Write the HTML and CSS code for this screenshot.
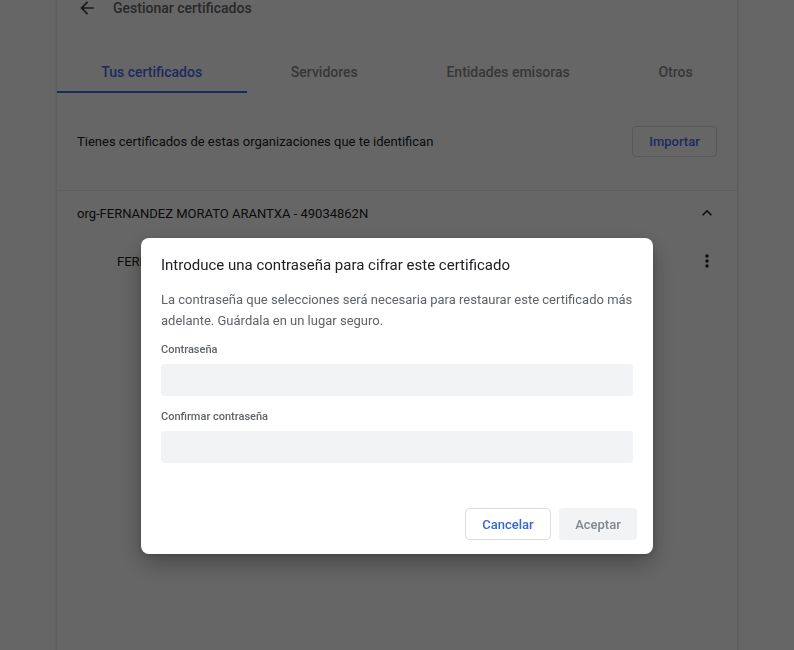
FILE: index.html
```html
<!DOCTYPE html>
<html lang="es">
<head>
<meta charset="utf-8">
<title>Gestionar certificados</title>
<link rel="stylesheet" href="styles.css">
</head>
<body>
<main class="card">
  <div class="header">
    <svg class="icon back" viewBox="0 0 24 24"><path d="M20 11H7.83l5.59-5.59L12 4l-8 8 8 8 1.41-1.41L7.83 13H20v-2z"/></svg>
    <h1 class="title">Gestionar certificados</h1>
  </div>
  <nav class="tabs">
    <div class="tab active">Tus certificados</div>
    <div class="tab">Servidores</div>
    <div class="tab">Entidades emisoras</div>
    <div class="tab">Otros</div>
  </nav>
  <section class="intro">
    <p class="intro-text">Tienes certificados de estas organizaciones que te identifican</p>
    <button class="btn-import">Importar</button>
  </section>
  <section class="org">
    <div class="org-row">
      <span class="org-name">org-FERNANDEZ MORATO ARANTXA - 49034862N</span>
      <svg class="icon" viewBox="0 0 24 24"><path d="M12 8l-6 6 1.41 1.41L12 10.83l4.59 4.58L18 14z"/></svg>
    </div>
    <div class="cert-row">
      <span class="cert-name">FERNANDEZ MORATO ARANTXA - 49034862N</span>
      <svg class="icon" viewBox="0 0 24 24"><path d="M12 8c1.1 0 2-.9 2-2s-.9-2-2-2-2 .9-2 2 .9 2 2 2zm0 2c-1.1 0-2 .9-2 2s.9 2 2 2 2-.9 2-2-.9-2-2-2zm0 6c-1.1 0-2 .9-2 2s.9 2 2 2 2-.9 2-2-.9-2-2-2z"/></svg>
    </div>
  </section>
</main>
<div class="scrim"></div>
<div class="dialog" role="dialog">
  <h2 class="dialog-title">Introduce una contraseña para cifrar este certificado</h2>
  <p class="dialog-body">La contraseña que selecciones será necesaria para restaurar este certificado más adelante. Guárdala en un lugar seguro.</p>
  <label class="field-label">Contraseña</label>
  <div class="field"></div>
  <label class="field-label second">Confirmar contraseña</label>
  <div class="field"></div>
  <div class="actions">
    <button class="btn-cancel">Cancelar</button>
    <button class="btn-accept">Aceptar</button>
  </div>
</div>
</body>
</html>
```

FILE: styles.css
```css
* { box-sizing: border-box; }
html, body { margin: 0; padding: 0; }
body {
  font-family: Roboto, "Liberation Sans", sans-serif;
  background: #ffffff;
  height: 650px;
  overflow: hidden;
}
.card {
  width: 680px;
  height: 650px;
  margin: 0 auto;
  background: #fff;
  box-shadow: 0 0 2px 1px rgba(0,0,0,0.12);
}
.icon { width: 20px; height: 20px; fill: #5f6368; flex: none; }
.header {
  display: flex;
  align-items: center;
  height: 16px;
  padding-left: 20px;
}
.header .back { fill: #444; }
.title {
  margin: 0 0 0 16px;
  font-size: 14px;
  font-weight: 500;
  color: #666;
  line-height: 18px;
}
.tabs {
  display: flex;
  margin-top: 37px;
}
.tab {
  flex: 1 1 auto;
  text-align: center;
  height: 40px;
  line-height: 38px;
  font-size: 14px;
  font-weight: 500;
  color: #8a8a8a;
  border-bottom: 2px solid transparent;
}
.tab.active {
  color: #4a6aee;
  border-bottom-color: #4a6aee;
}
.intro {
  display: flex;
  align-items: center;
  justify-content: space-between;
  height: 97px;
  padding: 0 20px;
}
.intro-text {
  margin: 0;
  font-size: 13px;
  color: #202124;
}
.btn-import {
  height: 31px;
  width: 85px;
  border: 1px solid #dadce0;
  border-radius: 4px;
  background: #fff;
  font-family: inherit;
  font-size: 13px;
  font-weight: 500;
  color: #4a6aee;
  padding: 0;
}
.org { border-top: 1px solid #e8eaed; }
.org-row {
  display: flex;
  align-items: center;
  justify-content: space-between;
  height: 44px;
  padding: 0 20px;
  font-size: 13px;
  color: #202124;
}
.org-row .icon, .cert-row .icon { fill: #202124; }
.cert-row {
  display: flex;
  align-items: center;
  justify-content: space-between;
  height: 52px;
  padding: 0 20px 0 60px;
  font-size: 13px;
  color: #202124;
}
.scrim {
  position: fixed;
  inset: 0;
  background: rgba(0,0,0,0.6);
}
.dialog {
  position: fixed;
  top: 238px;
  left: 50%;
  transform: translateX(-50%);
  width: 512px;
  height: 316px;
  background: #fff;
  border-radius: 8px;
  box-shadow: 0 10px 24px rgba(0,0,0,0.28), 0 2px 6px rgba(0,0,0,0.15);
  padding: 16px 20px 0;
  display: flex;
  flex-direction: column;
}
.dialog-title {
  margin: 0;
  font-size: 15px;
  font-weight: 400;
  line-height: 22px;
  color: #202124;
}
.dialog-body {
  margin: 13px 0 0;
  font-size: 13px;
  line-height: 21px;
  color: #5f6368;
}
.field-label {
  display: block;
  margin-top: 11px;
  font-size: 11px;
  font-weight: 500;
  line-height: 16px;
  color: #5f6368;
}
.field-label.second { margin-top: 13px; }
.field {
  margin-top: 6px;
  height: 32px;
  border-radius: 4px;
  background: #f1f3f4;
}
.actions {
  display: flex;
  justify-content: flex-end;
  gap: 8px;
  margin: 45px -4px 0 0;
}
.actions button {
  height: 32px;
  border-radius: 4px;
  font-family: inherit;
  font-size: 13px;
  font-weight: 500;
  padding: 0;
}
.btn-cancel {
  width: 86px;
  background: #fff;
  border: 1px solid #dadce0;
  color: #3367d6;
}
.btn-accept {
  width: 78px;
  background: #f1f3f4;
  border: none;
  color: #80868b;
}
```
